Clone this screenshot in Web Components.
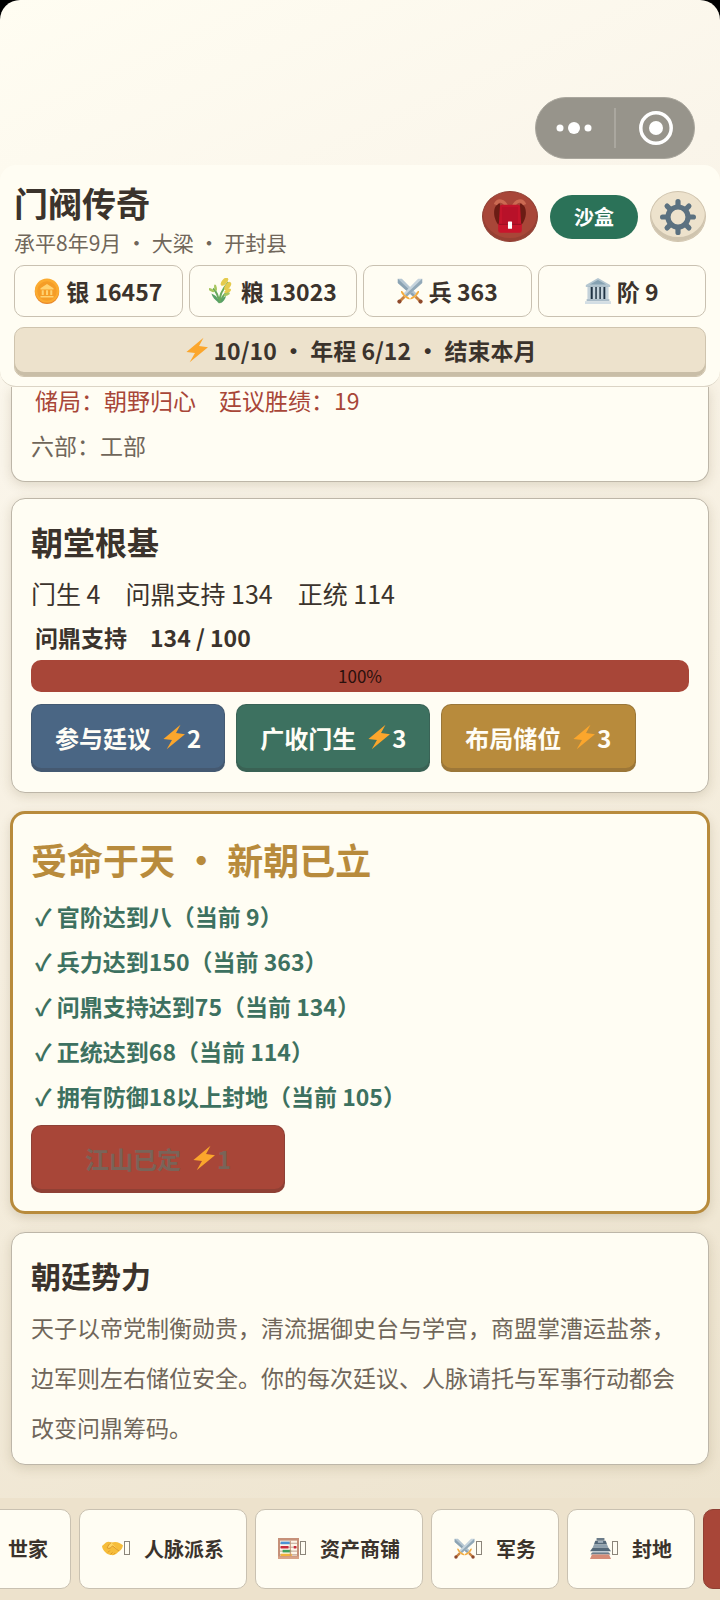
<!DOCTYPE html>
<html lang="zh-CN">
<head>
<meta charset="utf-8">
<meta name="viewport" content="width=device-width, initial-scale=1">
<title>门阀传奇</title>
<style>
  html { background: #000; }
  body {
    margin: 0;
    font-family: "Noto Sans CJK SC", sans-serif;
    color: #3b332c;
    --paper: #fffdf3;
    --sand: #ede2cc;
    --line: #c9c1b1;
    --red: #a84638;
    --green: #3d7160;
    --blue: #4a6684;
    --gold: #b88b3c;
    --muted: #70665a;
  }
</style>
</head>
<body>
<game-app></game-app>

<script>
const ICONS = {
  bolt: '<path d="M24 1 3 18.500l10.500 1.300L7 31 29.500 12.500 18.500 11.200z" fill="#fba62c"/>',
  coin: '<circle cx="16" cy="17" r="15" fill="#e8872a"/><circle cx="16" cy="15.500" r="15" fill="#fbab30"/><circle cx="16" cy="16" r="12" fill="#f59d27"/><path d="M8 12.500 16 7.500l8 5v1.500H8zM9.500 15h2.500v6H9.500zM14.800 15h2.500v6h-2.500zM20 15h2.500v6H20zM8 22h16v2H8z" fill="#ffd271"/>',
  wheat: '<path d="M13 31C12 22 17 13 24 5M12 30C12 22 9 17 5 13M14 30c1-7 5-10 9-13" fill="none" stroke="#67a95c" stroke-width="2.400"/><path d="M13 31C7 27 4 23 3 19c5 2 8 5 10 11M14 31c0-4 3-8 7-9-1 4-3 7-7 9" fill="#58a066"/><g fill="#e5cb4d"><ellipse cx="19" cy="4.500" rx="3" ry="6" transform="rotate(40 19 4.500)"/><ellipse cx="23" cy="10" rx="3" ry="6" transform="rotate(35 23 10)"/><ellipse cx="23" cy="16" rx="2.200" ry="4.500" transform="rotate(60 23 16)"/></g><g fill="#a7c65d"><ellipse cx="3" cy="15" rx="1.600" ry="4" transform="rotate(-60 3 15)"/><ellipse cx="8" cy="12" rx="1.600" ry="4" transform="rotate(-10 8 12)"/><ellipse cx="22" cy="20" rx="1.600" ry="4" transform="rotate(65 22 20)"/></g>',
  swords: '<path d="M1 1h5l18 18-4 4L1 6z" fill="#b5c6d2"/><path d="M1 1 22 21l-2 2L1 6z" fill="#8ba3b3"/><path d="M31 1h-5L8 19l4 4L31 6z" fill="#c6d4dd"/><path d="M31 1 10 21l2 2L31 6z" fill="#92a9b8"/><path d="M27 16c1.500 3-8 12-11 10 1-3 4-3 6-5s2-5 5-5M5 16c-1.500 3 8 12 11 10-1-3-4-3-6-5s-2-5-5-5" fill="#f3ac3d"/><path d="m23 23 5 5M9 23l-5 5" stroke="#c98443" stroke-width="3.500"/><circle cx="29" cy="29" r="2.600" fill="#8f4a2c"/><circle cx="3" cy="29" r="2.600" fill="#8f4a2c"/>',
  bank: '<path d="M16 0 31 8.500V11H1V8.500z" fill="#b4c6d0"/><path d="M16 2.500 26 8H6z" fill="#86a2b2"/><path d="M4 11h24v15H4z" fill="#1f3242"/><path d="M3 11h4v15H3zM9.500 11h3.200v15H9.500zM14.500 11h3.200v15h-3.200zM19.500 11h3.200v15h-3.200zM25 11h4v15h-4z" fill="#c4d2da"/><path d="M2 26h28v2.500H2z" fill="#a9bbc7"/><path d="M0 28.500h32V32H0z" fill="#d3dee4"/>',
  pack: '<path d="M7 4C0 5 0 19 8 25V9zM25 4c7 1 7 15-1 21V9z" fill="#6b1c14"/><path d="M3 5c2-5 8-4 10 2M29 5c-2-5-8-4-10 2" fill="none" stroke="#cb6a52" stroke-width="3"/><path d="M9 5h14q2 0 2 2l1 17H6L7 7q0-2 2-2" fill="#c4142b"/><path d="M9 7h14v14q0 2-2 2H11q-2 0-2-2z" fill="#b81129"/><path d="M5.500 22h21v6q0 2-2 2h-17q-2 0-2-2z" fill="#c9152c"/><path d="M6 22.500h20" stroke="#9c1024" stroke-width="1"/><rect x="14.200" y="20" width="3.600" height="6.500" rx=".5" fill="#fff"/>',
  gear: '<g fill="none" stroke="#5b7180"><circle cx="16" cy="16" r="8.900" stroke-width="4.600"/><path d="M16 2.300v4M16 25.700v4M2.300 16h4M25.700 16h4M6.300 6.300l3 3M22.700 22.700l3 3M25.700 6.300l-3 3M9.300 22.700l-3 3" stroke-width="4.600" stroke-linecap="round"/></g>',
  hands: '<path d="M0 12 6 7c3-2 6-1 8 0l6-1c5 0 8 2 12 5-1 6-4 8-7 10-3 4-8 6-11 5C8 25 1 20 0 12" fill="#f6bd3a"/><path d="M14 7c-3 2-5 5-6 8 3 2 6 0 8-3l11 9" fill="#ffd660"/><path d="M14 7c-3 2-5 5-6 8 3 2 6 0 8-3l10 8M9 22l3-3M13 25l3-3M18 25l2-2" fill="none" stroke="#d68c24" stroke-width="1.300"/>',
  abacus: '<path d="M0 0h32v32H0z" fill="#c69179"/><path d="M3 4h26v23H3z" fill="#fff6e8"/><path d="M3 8h26M3 14h26M3 20h26M3 25.500h26" stroke="#9c7a6a" stroke-width="1"/><path d="M4 5.500h14v4H4z" fill="#4c92d4"/><path d="M4 12h12v4H4zM24 12h4v4h-4z" fill="#c92a3c"/><path d="M7 18h13v4H7z" fill="#41a05a"/><path d="M4 24h17v3.500H4z" fill="#f1b23a"/><path d="M18 4h1.500v23H18z" fill="#c69179"/><path d="M0 28h32v4H0z" fill="#d9a387"/>',
  castle: '<path d="M10 0h12v4H10z" fill="#6c7c89"/><path d="M8 4h16l2 6H6z" fill="#546878"/><path d="M12 5h8v2h-8z" fill="#c4d0d8"/><path d="M6 10h20l2 5H4z" fill="#8fa1ae"/><path d="m4 15-4 5h32l-4-5z" fill="#546878"/><path d="M4 20h24v3H4z" fill="#bccad3"/><path d="m3 22-2 3h30l-2-3z" fill="#6c7c89"/><path d="M3 25h26l3 7H0z" fill="#d58c77"/>'
};

function define(name, html, setup) {
  const template = document.createElement('template');
  template.innerHTML = html;
  customElements.define(name, class extends HTMLElement {
    connectedCallback() {
      if (this.shadowRoot) return;
      this.attachShadow({ mode: 'open' }).append(template.content.cloneNode(true));
      if (setup) setup(this, this.shadowRoot);
    }
  });
}

define('game-icon', `
  <style>
    :host { display: inline-block; flex: none; width: var(--icon, 26px); height: var(--icon, 26px); }
    svg { display: block; width: 100%; height: 100%; }
  </style>
  <svg viewBox="0 0 32 32" aria-hidden="true"></svg>`,
  (el, root) => { root.querySelector('svg').innerHTML = ICONS[el.getAttribute('name')]; });

define('system-capsule', `
  <style>
    :host { display: flex; align-items: center; box-sizing: border-box; width: 160px; height: 62px;
      background: #97948b; border: 1px solid #aaa79e; border-radius: 31px; }
    button { flex: 1; display: grid; place-items: center; height: 40px; padding: 0 2px 0 0; border: 0; background: none; }
    button + button { padding: 0 0 0 2px; border-left: 2px solid #aaa79f; }
  </style>
  <button type="button" aria-label="更多"><svg width="36" height="14" fill="#fff"><circle cx="4" cy="7" r="3.500"/><circle cx="18" cy="7" r="6"/><circle cx="32" cy="7" r="3.500"/></svg></button>
  <button type="button" aria-label="关闭"><svg width="34" height="34" fill="#fff"><circle cx="17" cy="17" r="15.200" fill="none" stroke="#fff" stroke-width="3.500"/><circle cx="17" cy="17" r="7"/></svg></button>`);

define('round-button', `
  <style>
    :host { display: block; }
    button { display: grid; place-items: center; width: 56px; height: 51px; padding: 0; border: 1px solid #cfc3ad;
      border-radius: 50%; background: var(--sand); box-shadow: inset 0 -4px 0 #cfc4ae; --icon: 36px; }
    :host([tone="red"]) button { background: var(--red); border-color: #8f4034; box-shadow: inset 0 -3px 0 #964033; }
  </style>
  <button type="button"><slot></slot></button>`,
  (el, root) => root.querySelector('button').setAttribute('aria-label', el.getAttribute('label')));

define('stat-chip', `
  <style>
    :host { display: flex; align-items: center; justify-content: center; gap: 6px; box-sizing: border-box; height: 52px;
      border: 1px solid var(--line); border-radius: 10px; font-size: 23px; font-weight: 700; white-space: nowrap; }
  </style>
  <slot name="icon"></slot><span><slot></slot></span>`);

define('game-header', `
  <style>
    :host { display: block; padding: 16px 14px 9px; background: var(--paper); border-bottom: 1px solid #dbd4c5;
      border-radius: 16px; position: relative; }
    .top { display: flex; justify-content: space-between; align-items: flex-start; height: 76px; margin-bottom: 8px; }
    h1 { margin: 0 0 2px; font-size: 34px; line-height: 44px; }
    p { margin: 0; font-size: 21px; line-height: 30px; color: var(--muted); }
    .actions { display: flex; align-items: center; gap: 12px; padding-top: 10px; }
    .mode { height: 44px; padding: 0 23px; border: 0; border-radius: 22px; background: #2b7258; color: #fff; font: 700 20px "Noto Sans CJK SC", sans-serif; }
    .mode { min-width: 88px; }
    .stats { display: grid; grid-template-columns: repeat(4, 1fr); gap: 6px; margin-bottom: 10px; }
    .turn { display: flex; align-items: center; justify-content: center; gap: 4px; width: 100%; height: 50px; padding: 0 0 4px;
      border: 1px solid #cfc4ae; border-radius: 10px; background: var(--sand); box-shadow: inset 0 -4px 0 #c9bea7;
      color: inherit; font: 700 23px "Noto Sans CJK SC", sans-serif; }
  </style>
  <div class="top">
    <div><h1>门阀传奇</h1><p>承平8年9月 ・ 大梁 ・ 开封县</p></div>
    <div class="actions">
      <round-button tone="red" label="背包"><game-icon name="pack"></game-icon></round-button>
      <button class="mode" type="button">沙盒</button>
      <round-button label="设置"><game-icon name="gear"></game-icon></round-button>
    </div>
  </div>
  <div class="stats">
    <stat-chip><game-icon slot="icon" name="coin"></game-icon>银 16457</stat-chip>
    <stat-chip><game-icon slot="icon" name="wheat"></game-icon>粮 13023</stat-chip>
    <stat-chip><game-icon slot="icon" name="swords"></game-icon>兵 363</stat-chip>
    <stat-chip><game-icon slot="icon" name="bank"></game-icon>阶 9</stat-chip>
  </div>
  <button class="turn" type="button"><game-icon name="bolt"></game-icon><span>10/10 ・ 年程 6/12 ・ 结束本月</span></button>`);

define('game-card', `
  <style>
    :host { display: block; padding: 18px 19px 20px; background: var(--paper); border: 1px solid #bdb6a8; border-radius: 14px;
      box-shadow: 0 3px 12px rgba(90, 70, 30, .17); }
    :host([kind="continued"]) { padding: 0 19px 21px; border-top: 0; border-radius: 0 0 14px 14px; }
    :host([kind="gold"]) { margin: 3px 0; padding: 18px 18px; border: 2px solid var(--gold);
      box-shadow: 0 0 0 1px var(--gold), 0 4px 12px rgba(90, 70, 30, .2); }
    :host([kind="note"]) { padding-bottom: 12px; }
  </style>
  <slot></slot>`);

define('meter-bar', `
  <style>
    :host { display: block; height: 32px; border-radius: 10px; overflow: hidden; background: #f3d3c6; margin-bottom: 12px; }
    div { height: 100%; background: var(--red); color: #2a100c; font-size: 17px; line-height: 32px; text-align: center; }
  </style>
  <div role="progressbar" aria-valuenow="100" aria-valuemin="0" aria-valuemax="100"><slot></slot></div>`);

define('action-button', `
  <style>
    :host { display: block; }
    button { display: flex; align-items: center; justify-content: center; box-sizing: border-box; width: 100%; height: 68px;
      padding: 0 23px 2px; border: 1px solid rgba(50, 50, 50, .22); border-radius: 10px; background: var(--tone);
      box-shadow: inset 0 -3px 0 rgba(50, 40, 40, .2); color: #fffdf6; font: 700 24px "Noto Sans CJK SC", sans-serif; white-space: nowrap; }
    button:disabled { color: #796459; padding: 0 53px 2px; }
    game-icon { margin-left: 10px; }
  </style>
  <button type="button"><span><slot></slot></span><game-icon name="bolt"></game-icon><span class="cost"></span></button>`,
  (el, root) => {
    root.querySelector('.cost').textContent = el.getAttribute('cost');
    root.querySelector('button').disabled = el.hasAttribute('disabled');
    el.style.setProperty('--tone', `var(--${el.getAttribute('tone')})`);
  });

define('game-tab', `
  <style>
    :host { display: block; flex: none; }
    button { display: flex; align-items: center; box-sizing: border-box; min-width: 128px; height: 80px; padding: 0 22px 2px; --icon: 21px;
      border: 1px solid var(--line); border-radius: 10px; background: var(--paper); color: inherit;
      font: 700 20px "Noto Sans CJK SC", sans-serif; white-space: nowrap; }
    .mark { box-sizing: border-box; width: 6px; height: 14px; margin: 0 14px 0 1px; border: 1px solid #8b857a; }
    :host([active]) button { background: var(--red); border-color: #8f4034; }
    :host([active]) .mark { display: none; }
  </style>
  <button type="button"><slot name="icon"></slot><span class="mark"></span><slot></slot></button>`,
  (el, root) => {
    if (el.hasAttribute('label')) root.querySelector('button').setAttribute('aria-label', el.getAttribute('label'));
  });

define('tab-strip', `
  <style>
    :host { display: block; background: var(--sand); }
    nav { display: flex; gap: 8px; padding: 11px 0; overflow-x: auto; scrollbar-width: none; }
    nav::-webkit-scrollbar { display: none; }
  </style>
  <nav aria-label="主菜单"><slot></slot></nav>`,
  (el, root) => { el.scrollTabs = (x) => { root.querySelector('nav').scrollLeft = x; }; });

define('game-app', `
  <style>
    :host { display: flex; flex-direction: column; min-height: 100vh; border-radius: 20px 20px 0 0; overflow: hidden;
      background: linear-gradient(155deg, #fffdf2 0%, #faf5ea 24%, #f6efe0 50%, #ece2cc 100%); }
    .status { display: flex; justify-content: flex-end; padding: 97px 25px 6px; }
    main { flex: 1; display: flex; flex-direction: column; gap: 16px; padding: 0 11px 33px; }
    h2 { margin: 0; font-size: 32px; line-height: 48px; }
    .gold { margin-bottom: 8px; font-size: 36px; line-height: 54px; color: var(--gold); }
    .small { margin-bottom: 3px; font-size: 30px; }
    p { margin: 0; font-size: 23px; line-height: 30px; color: var(--muted); }
    .heir { margin-bottom: 17px; padding-left: 4px; line-height: 26px; color: var(--red); }
    .base { margin: 8px 0 6px; font-size: 25px; line-height: 40px; color: inherit; }
    .support { margin-bottom: 5px; padding-left: 4px; line-height: 36px; font-weight: 700; color: inherit; }
    .actions { display: flex; gap: 11px; }
    ul { margin: 0 0 6px; padding: 0 0 0 4px; list-style: none; font-size: 23px; line-height: 45px; font-weight: 700; color: var(--green); }
    .about { line-height: 50px; }
  </style>
  <div class="status"><system-capsule></system-capsule></div>
  <game-header></game-header>
  <main>
    <game-card kind="continued">
      <p class="heir">储局：朝野归心　廷议胜绩：19</p>
      <p>六部：工部</p>
    </game-card>
    <game-card>
      <h2>朝堂根基</h2>
      <p class="base">门生 4　问鼎支持 134　正统 114</p>
      <p class="support">问鼎支持　134 / 100</p>
      <meter-bar>100%</meter-bar>
      <div class="actions">
        <action-button tone="blue" cost="2">参与廷议</action-button>
        <action-button tone="green" cost="3">广收门生</action-button>
        <action-button tone="gold" cost="3">布局储位</action-button>
      </div>
    </game-card>
    <game-card kind="gold">
      <h2 class="gold">受命于天 ・ 新朝已立</h2>
      <ul>
        <li>✓ 官阶达到八（当前 9）</li>
        <li>✓ 兵力达到150（当前 363）</li>
        <li>✓ 问鼎支持达到75（当前 134）</li>
        <li>✓ 正统达到68（当前 114）</li>
        <li>✓ 拥有防御18以上封地（当前 105）</li>
      </ul>
      <div class="actions"><action-button tone="red" cost="1" disabled>江山已定</action-button></div>
    </game-card>
    <game-card kind="note">
      <h2 class="small">朝廷势力</h2>
      <p class="about">天子以帝党制衡勋贵，清流据御史台与学宫，商盟掌漕运盐茶，边军则左右储位安全。你的每次廷议、人脉请托与军事行动都会改变问鼎筹码。</p>
    </game-card>
  </main>
  <tab-strip>
    <game-tab><game-icon slot="icon" name="bank"></game-icon>世家</game-tab>
    <game-tab><game-icon slot="icon" name="hands"></game-icon>人脉派系</game-tab>
    <game-tab><game-icon slot="icon" name="abacus"></game-icon>资产商铺</game-tab>
    <game-tab><game-icon slot="icon" name="swords"></game-icon>军务</game-tab>
    <game-tab><game-icon slot="icon" name="castle"></game-icon>封地</game-tab>
    <game-tab active label="朝堂"></game-tab>
  </tab-strip>`);

document.querySelector('game-app').shadowRoot.querySelector('tab-strip').scrollTabs(57);
</script>
</body>
</html>
